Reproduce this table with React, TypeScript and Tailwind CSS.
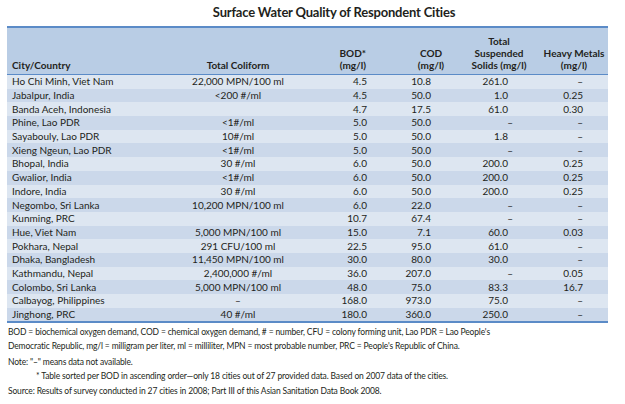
import React from 'react';

type Row = {
    city: string;
    coliform: string;
    bod: string;
    cod: string;
    tss: string;
    metals: string;
};

const rows: Row[] = [
    { city: 'Ho Chi Minh, Viet Nam', coliform: '22,000 MPN/100 ml', bod: '4.5', cod: '10.8', tss: '261.0', metals: '–' },
    { city: 'Jabalpur, India', coliform: '<200 #/ml', bod: '4.5', cod: '50.0', tss: '1.0', metals: '0.25' },
    { city: 'Banda Aceh, Indonesia', coliform: '', bod: '4.7', cod: '17.5', tss: '61.0', metals: '0.30' },
    { city: 'Phine, Lao PDR', coliform: '<1#/ml', bod: '5.0', cod: '50.0', tss: '–', metals: '–' },
    { city: 'Sayabouly, Lao PDR', coliform: '10#/ml', bod: '5.0', cod: '50.0', tss: '1.8', metals: '–' },
    { city: 'Xieng Ngeun, Lao PDR', coliform: '<1#/ml', bod: '5.0', cod: '50.0', tss: '–', metals: '–' },
    { city: 'Bhopal, India', coliform: '30 #/ml', bod: '6.0', cod: '50.0', tss: '200.0', metals: '0.25' },
    { city: 'Gwalior, India', coliform: '<1#/ml', bod: '6.0', cod: '50.0', tss: '200.0', metals: '0.25' },
    { city: 'Indore, India', coliform: '30 #/ml', bod: '6.0', cod: '50.0', tss: '200.0', metals: '0.25' },
    { city: 'Negombo, Sri Lanka', coliform: '10,200 MPN/100 ml', bod: '6.0', cod: '22.0', tss: '–', metals: '–' },
    { city: 'Kunming, PRC', coliform: '', bod: '10.7', cod: '67.4', tss: '–', metals: '–' },
    { city: 'Hue, Viet Nam', coliform: '5,000 MPN/100 ml', bod: '15.0', cod: '7.1', tss: '60.0', metals: '0.03' },
    { city: 'Pokhara, Nepal', coliform: '291 CFU/100 ml', bod: '22.5', cod: '95.0', tss: '61.0', metals: '–' },
    { city: 'Dhaka, Bangladesh', coliform: '11,450 MPN/100 ml', bod: '30.0', cod: '80.0', tss: '30.0', metals: '–' },
    { city: 'Kathmandu, Nepal', coliform: '2,400,000 #/ml', bod: '36.0', cod: '207.0', tss: '–', metals: '0.05' },
    { city: 'Colombo, Sri Lanka', coliform: '5,000 MPN/100 ml', bod: '48.0', cod: '75.0', tss: '83.3', metals: '16.7' },
    { city: 'Calbayog, Philippines', coliform: '–', bod: '168.0', cod: '973.0', tss: '75.0', metals: '–' },
    { city: 'Jinghong, PRC', coliform: '40 #/ml', bod: '180.0', cod: '360.0', tss: '250.0', metals: '–' },
];

const grid = 'grid grid-cols-[163px_136px_84px_76px_74px_68px]';

const App: React.FC = () => {
    return (
        <div className="w-[625px] h-[404px] bg-white text-[#231f20] font-['Lato','Liberation_Sans',sans-serif] pt-[3px]">
            <h1 className="text-center pl-[43px] text-[13px] font-bold leading-[18px] tracking-[-0.2px]">Surface Water Quality of Respondent Cities</h1>

            <div className="mx-[7px] mt-[5px] w-[601px] border-t-2 border-b-2 border-[#5b8bc7] text-[10px]">
                <div className={`${grid} h-[47px] bg-[#b9cde5] border-b-[1.5px] border-[#5b8bc7] font-bold leading-[12px] items-end pb-[3px]`}>
                    <div className="pl-[5px]">City/Country</div>
                    <div className="text-center">Total Coliform</div>
                    <div className="text-right pr-[24px]">BOD*<br />(mg/l)</div>
                    <div className="text-center pl-[6px]">COD<br />(mg/l)</div>
                    <div className="text-center pr-[8px]">Total<br />Suspended<br />Solids (mg/l)</div>
                    <div className="text-center">Heavy Metals<br />(mg/l)</div>
                </div>
                {rows.map((r, i) => (
                    <div
                        key={r.city}
                        className={`${grid} h-[13.7px] items-center leading-[13px] ${i % 2 === 0 ? 'bg-[#dde6f1]' : 'bg-[#cbd8ea]'}`}
                    >
                        <div className="pl-[5px]">{r.city}</div>
                        <div className="text-center">{r.coliform}</div>
                        <div className="text-right pr-[23px]">{r.bod}</div>
                        <div className="text-right pr-[35px]">{r.cod}</div>
                        <div className={`text-right ${r.tss === '–' ? 'pr-[27px]' : 'pr-[32px]'}`}>{r.tss}</div>
                        <div className="text-right pr-[25px]">{r.metals}</div>
                    </div>
                ))}
            </div>

            <div className="px-[8px] pt-[3px] text-[8.5px] leading-[13.5px] tracking-[-0.15px]">
                <p>
                    BOD = biochemical oxygen demand, COD = chemical oxygen demand, # = number, CFU = colony forming unit, Lao PDR = Lao People's
                    <br />
                    Democratic Republic, mg/l = milligram per liter, ml = milliliter, MPN = most probable number, PRC = People's Republic of China.
                </p>
                <p className="mt-[3px]">Note: "–" means data not available.</p>
                <p className="pl-[28px]">* Table sorted per BOD in ascending order—only 18 cities out of 27 provided data. Based on 2007 data of the cities.</p>
                <p className="mt-[2px]">Source: Results of survey conducted in 27 cities in 2008; Part III of this Asian Sanitation Data Book 2008.</p>
            </div>
        </div>
    );
};

export default App;
